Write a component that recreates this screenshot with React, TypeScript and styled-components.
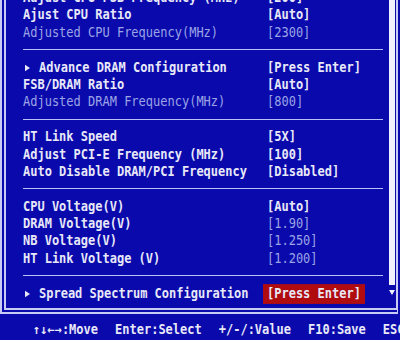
import styled, { createGlobalStyle } from "styled-components";

type Item =
  | { kind: "row"; label: string; value: string; dimLabel?: boolean; dimValue?: boolean; sub?: boolean; selected?: boolean }
  | { kind: "sep" };

const items: Item[] = [
  { kind: "row", label: "Adjust CPU FSB Frequency (MHz)", value: "[200]" },
  { kind: "row", label: "Ajust CPU Ratio", value: "[Auto]" },
  { kind: "row", label: "Adjusted CPU Frequency(MHz)", value: "[2300]", dimLabel: true, dimValue: true },
  { kind: "sep" },
  { kind: "row", label: "Advance DRAM Configuration", value: "[Press Enter]", sub: true },
  { kind: "row", label: "FSB/DRAM Ratio", value: "[Auto]" },
  { kind: "row", label: "Adjusted DRAM Frequency(MHz)", value: "[800]", dimLabel: true, dimValue: true },
  { kind: "sep" },
  { kind: "row", label: "HT Link Speed", value: "[5X]" },
  { kind: "row", label: "Adjust PCI-E Frequency (MHz)", value: "[100]" },
  { kind: "row", label: "Auto Disable DRAM/PCI Frequency", value: "[Disabled]" },
  { kind: "sep" },
  { kind: "row", label: "CPU Voltage(V)", value: "[Auto]" },
  { kind: "row", label: "DRAM Voltage(V)", value: "[1.90]", dimValue: true },
  { kind: "row", label: "NB Voltage(V)", value: "[1.250]", dimValue: true },
  { kind: "row", label: "HT Link Voltage (V)", value: "[1.200]", dimValue: true },
  { kind: "sep" },
  { kind: "row", label: "Spread Spectrum Configuration", value: "[Press Enter]", sub: true, selected: true },
];

const hints = ["↑↓←→:Move", "Enter:Select", "+/-/:Value", "F10:Save", "ESC:Exit"];

function App() {
  return (
    <Screen>
      <GlobalStyle />
      <Frame>
        <Content>
          {items.map((it, i) =>
            it.kind === "sep" ? (
              <Separator key={i} />
            ) : (
              <Row key={i}>
                <Label $dim={it.dimLabel}>
                  {it.sub && <Arrow />}
                  {it.label}
                </Label>
                <Value $dim={it.dimValue} $selected={it.selected}>
                  {it.value}
                </Value>
              </Row>
            )
          )}
        </Content>
        <ScrollColumn>
          <Thumb />
          <DownArrow />
        </ScrollColumn>
      </Frame>
      <Footer>
        {hints.map((h) => (
          <Hint key={h}>{h}</Hint>
        ))}
      </Footer>
    </Screen>
  );
}

export default App;

const GlobalStyle = createGlobalStyle`
  body {
    margin: 0;
    background: #0a0aac;
  }
`;

const Screen = styled.div`
  width: 400px;
  height: 340px;
  display: flex;
  flex-direction: column;
  overflow: hidden;
  background: #0a0aac;
  font-family: "DejaVu Sans Mono", "Liberation Mono", monospace;
  font-size: 12px;
  font-weight: bold;
  color: #e8e8f8;
`;

const Frame = styled.div`
  height: 314px;
  width: 398px;
  box-sizing: border-box;
  display: flex;
  overflow: hidden;
  border-left: 6px double #c8ccf4;
  border-bottom: 6px double #c8ccf4;
  border-right: 2px solid #c8ccf4;
`;

const Content = styled.div`
  flex: 1;
  margin-top: -11px;
  padding: 0 5px 0 17px;
  display: flex;
  flex-direction: column;
`;

const Row = styled.div`
  height: 17.4px;
  display: flex;
  align-items: center;
  white-space: nowrap;
  flex-shrink: 0;
  transform: scaleY(1.1);
`;

const Label = styled.div<{ $dim?: boolean }>`
  width: 244px;
  display: flex;
  align-items: center;
  color: ${(p) => (p.$dim ? "#9ca4e6" : "#e8e8f8")};
  font-weight: ${(p) => (p.$dim ? "normal" : "bold")};
`;

const Arrow = styled.span`
  width: 0;
  height: 0;
  border-top: 3.5px solid transparent;
  border-bottom: 3.5px solid transparent;
  border-left: 5px solid #e8e8f8;
  margin: 0 9px 0 2px;
`;

const Value = styled.div<{ $dim?: boolean; $selected?: boolean }>`
  color: ${(p) => (p.$dim ? "#9ca4e6" : "#e8e8f8")};
  font-weight: ${(p) => (p.$dim ? "normal" : "bold")};
  background: ${(p) => (p.$selected ? "#b00c10" : "transparent")};
  padding: ${(p) => (p.$selected ? "2px 4px" : "0")};
  margin-left: ${(p) => (p.$selected ? "-4px" : "0")};
`;

const Separator = styled.div`
  height: 17.4px;
  flex-shrink: 0;
  display: flex;
  align-items: center;
  &::after {
    content: "";
    flex: 1;
    height: 1px;
    background: #b8c0f8;
  }
`;

const ScrollColumn = styled.div`
  width: 8px;
  display: flex;
  flex-direction: column;
  align-items: center;
`;

const Thumb = styled.div`
  width: 6px;
  height: 285px;
  background: #f0f0ff;
`;

const DownArrow = styled.div`
  margin-top: 5px;
  width: 0;
  height: 0;
  border-left: 3px solid transparent;
  border-right: 3px solid transparent;
  border-top: 5px solid #f0f0ff;
`;

const Footer = styled.div`
  flex: 1;
  display: flex;
  align-items: center;
  gap: 17px;
  padding: 3px 0 0 33px;
  white-space: nowrap;
  overflow: hidden;
  transform: scaleY(1.1);
`;

const Hint = styled.span`
  color: #e8e8f8;
`;
